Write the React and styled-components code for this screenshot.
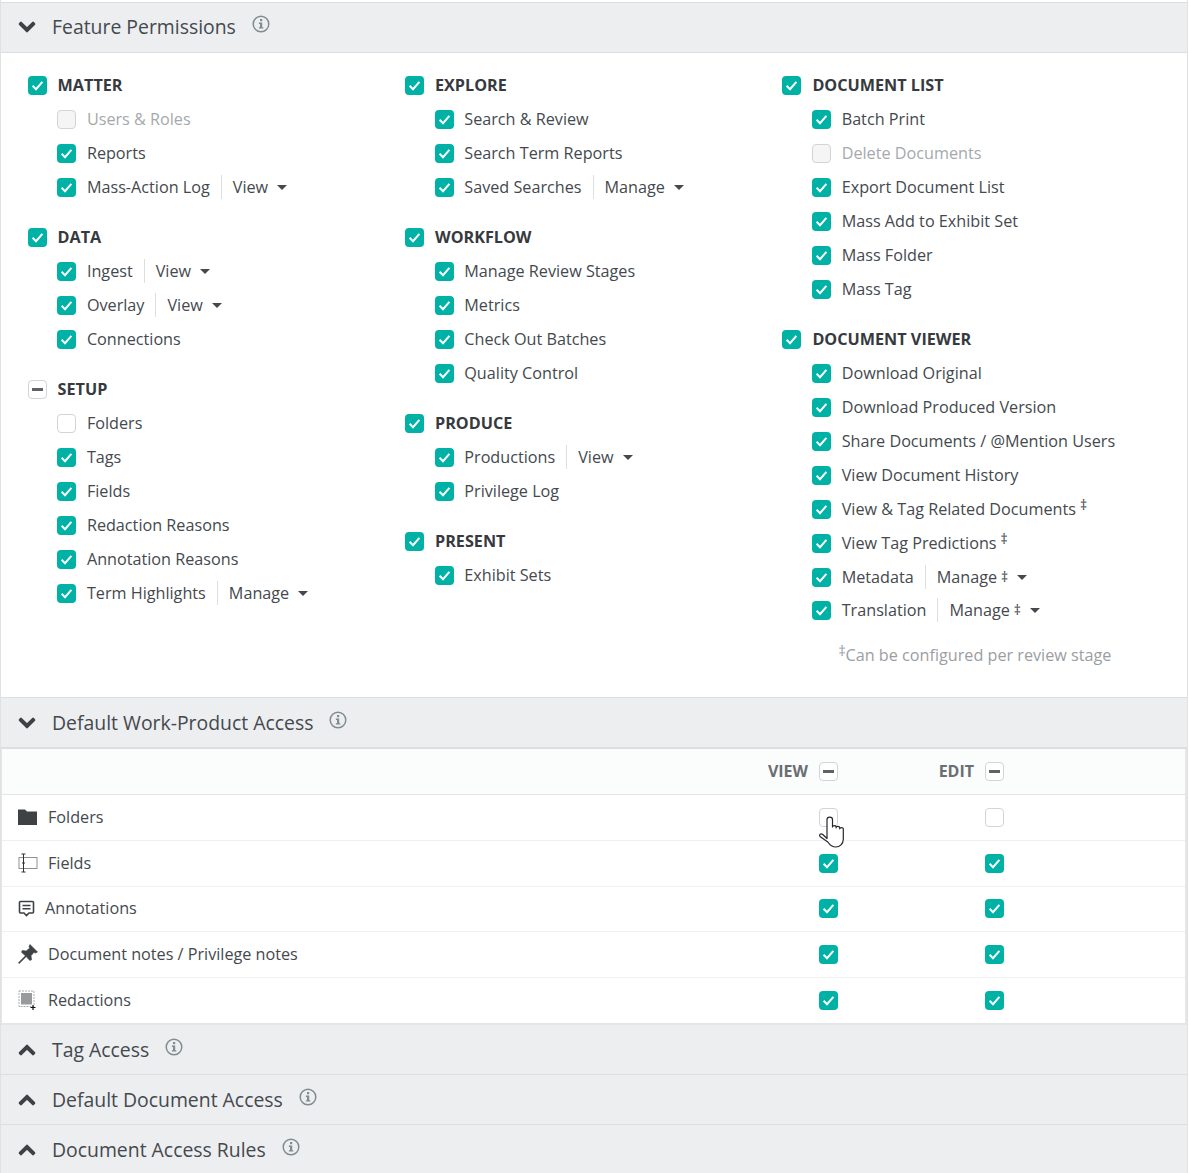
import React from 'react';
import styled, { createGlobalStyle } from 'styled-components';
import { FaChevronDown, FaChevronUp } from 'react-icons/fa';

const GlobalStyle = createGlobalStyle`
  html, body {
    margin: 0;
    padding: 0;
    background: #fff;
    font-family: "Open Sans", "Liberation Sans", sans-serif;
    font-size: 16.2px;
    color: #44494e;
  }
  * { box-sizing: border-box; }
`;

const Page = styled.div`
  position: relative;
  width: 1188px;
  height: 1173px;
  overflow: hidden;
  padding-top: 2px;
  border-left: 1px solid #dfe1e3;
  border-right: 1px solid #dfe1e3;
`;

const SectionHeader = styled.div`
  display: flex;
  align-items: center;
  height: ${({ $height }) => $height || 51}px;
  padding-left: 17px;
  padding-bottom: ${({ $lift }) => ($lift ? 2 : 0)}px;
  background: #edeef0;
  border-top: ${({ $flush }) => ($flush ? 'none' : '1px solid #dcdee0')};
  border-bottom: ${({ $thick }) => ($thick ? 2 : 1)}px solid #dcdee0;
  color: #44494e;
  font-size: 19.4px;
  line-height: 26px;
`;

const Chevron = styled.span`
  display: flex;
  width: 18px;
  margin-right: 16px;
  color: #3e4245;
  font-size: 18px;
  svg { stroke: currentColor; stroke-width: 36; }
`;

const InfoMark = styled.svg`
  width: 18px;
  height: 18px;
  margin-left: 16px;
  margin-top: -6px;
`;

const InfoIcon = () => (
  <InfoMark viewBox="0 0 18 18">
    <circle cx="9" cy="9" r="7.8" fill="none" stroke="#7f8c90" strokeWidth="1.5" />
    <rect x="8" y="4" width="2.2" height="2.2" fill="#7f8c90" />
    <path d="M6.9 7.6h3.3v4.6h1.1v1.3H6.9v-1.3H8V8.9H6.9z" fill="#7f8c90" />
  </InfoMark>
);

const Columns = styled.div`
  display: grid;
  grid-template-columns: 377.4px 377.4px 1fr;
  height: 644px;
  padding: 15px 0 0 26.6px;
`;

const Group = styled.div`
  margin-bottom: 16px;
`;

const Row = styled.div`
  display: flex;
  align-items: center;
  height: ${({ $height }) => $height || 34}px;
  padding-left: ${({ $head }) => ($head ? 0 : 29.8)}px;
`;

const Box = styled.span`
  display: inline-flex;
  flex: none;
  align-items: center;
  justify-content: center;
  width: 19px;
  height: 19px;
  border-radius: 4px;
  background: ${({ $state }) =>
    $state === 'on' ? '#00b1a6' : $state === 'disabled' ? '#f5f5f5' : '#fff'};
  border: ${({ $state }) =>
    $state === 'on' ? 'none' : '1px solid #d2d4d6'};
`;

const Dash = styled.span`
  width: 11px;
  height: 3px;
  background: #5f6366;
`;

const CheckBox = ({ state }) => (
  <Box $state={state}>
    {state === 'on' && (
      <svg width="13" height="11" viewBox="0 0 13 11">
        <path d="M1.6 5.8l3.4 3.4 6.4-7.4" fill="none" stroke="#fff" strokeWidth="2" />
      </svg>
    )}
    {state === 'mixed' && <Dash />}
  </Box>
);

const HeadLabel = styled.span`
  margin-left: 11px;
  font-weight: 700;
  color: #363a3e;
`;

const Label = styled.span`
  margin-left: 10.5px;
  color: ${({ $disabled }) => ($disabled ? '#a5a9ad' : '#44494e')};
`;

const Dropdown = styled.span`
  display: inline-flex;
  align-items: center;
  height: 24px;
  margin-left: 11px;
  padding-left: 11px;
  border-left: 1px solid #dcdee0;
`;

const Caret = styled.span`
  width: 0;
  height: 0;
  margin-left: 9px;
  border-left: 5.5px solid transparent;
  border-right: 5.5px solid transparent;
  border-top: 5px solid #44494e;
`;

const Dagger = styled.sup`
  margin-left: 4px;
  font-size: 14px;
  line-height: 0;
  vertical-align: 5px;
`;

const Note = styled.div`
  margin-top: 18px;
  padding-left: 56px;
  color: #9a9ea2;
`;

const NoteDagger = styled.sup`
  font-size: 14px;
  line-height: 0;
  vertical-align: 5px;
`;

const Table = styled.div`
  height: 276px;
  border: 2px solid #e4e6e8;
  border-top: none;
  border-left-width: 1px;
`;

const TableHead = styled.div`
  display: grid;
  grid-template-columns: 1fr 166px 166px;
  align-items: center;
  height: 46px;
  padding-right: 181px;
  background: #fbfcfc;
  border-bottom: 1px solid #e2e4e6;
`;

const HeadCell = styled.div`
  display: flex;
  align-items: center;
  justify-content: flex-end;
  gap: 11px;
  color: #6a6e72;
  font-size: 16px;
  font-weight: 700;
`;

const HeadText = styled.span`
  margin-top: -1px;
`;

const TableRow = styled.div`
  display: grid;
  grid-template-columns: 1fr 166px 166px;
  align-items: center;
  height: ${({ $height }) => $height || 46}px;
  padding-right: 181px;
  padding-bottom: ${({ $lift }) => ($lift ? 1 : 0)}px;
  border-bottom: 1px solid #eff0f1;
  &:last-child { border-bottom: none; }
`;

const NameCell = styled.div`
  display: flex;
  align-items: center;
  padding-left: 16px;
  margin-top: -1px;
`;

const RowIcon = styled.span`
  display: flex;
  align-items: center;
  justify-content: flex-start;
  width: ${({ $width }) => $width || 30}px;
  height: 20px;
  color: #3e4245;
`;

const CheckCell = styled.div`
  display: flex;
  justify-content: flex-end;
`;

const Pointer = styled.svg`
  position: absolute;
  left: 816px;
  top: 815px;
  width: 30px;
  height: 34px;
`;

const FolderIcon = () => (
  <svg width="19" height="16" viewBox="0 0 19 16">
    <path d="M0 .5h7L9 2.500h10V16H0z" fill="#3e4245" />
  </svg>
);

const FieldIcon = () => (
  <svg width="20" height="20" viewBox="0 0 20 20">
    <rect x="1" y="4.500" width="18" height="11" fill="none" stroke="#8d9194" strokeWidth="1" />
    <path d="M3.500 1h4M5.500 1v18M3.500 19h4M4 10h3" fill="none" stroke="#2e3235" strokeWidth="1" />
  </svg>
);

const NoteIcon = () => (
  <svg width="17" height="17" viewBox="0 0 17 17">
    <path d="M2.500 1.500h12a1 1 0 0 1 1 1v9.500a1 1 0 0 1-1 1h-3.500l-2.500 2.500-2.500-2.500H2.500a1 1 0 0 1-1-1V2.500a1 1 0 0 1 1-1z" fill="none" stroke="#3e4245" strokeWidth="1.600" />
    <path d="M4.500 5.500h8M4.500 8.800h8" stroke="#3e4245" strokeWidth="1.500" />
  </svg>
);

const PinIcon = () => (
  <svg width="20" height="20" viewBox="0 0 20 20">
    <path d="M12 .5l7.500 7.500-2 1-1.500-.7-3 3.500.6 3.900-1.800.8-3.600-3.900-7 7-.8-.8 7-7-3.900-3.600.8-1.800 3.900.6 3.500-3-.7-1.500z" fill="#3e4245" stroke="#3e4245" strokeWidth=".6" strokeLinejoin="round" />
  </svg>
);

const RedactIcon = () => (
  <svg width="20" height="20" viewBox="0 0 20 20">
    <rect x="1" y="1" width="15" height="15.500" fill="none" stroke="#a9acae" strokeDasharray="2 1" />
    <rect x="3" y="3" width="11" height="11.500" fill="#989a9c" />
    <path d="M15 15v5M12.500 17.500h5" stroke="#111" strokeWidth="1.200" />
  </svg>
);

const columns = [
  [
    { title: 'MATTER', state: 'on', items: [
      { label: 'Users & Roles', state: 'disabled' },
      { label: 'Reports' },
      { label: 'Mass-Action Log', menu: 'View' },
    ] },
    { title: 'DATA', state: 'on', items: [
      { label: 'Ingest', menu: 'View' },
      { label: 'Overlay', menu: 'View' },
      { label: 'Connections' },
    ] },
    { title: 'SETUP', state: 'mixed', items: [
      { label: 'Folders', state: 'off' },
      { label: 'Tags' },
      { label: 'Fields' },
      { label: 'Redaction Reasons' },
      { label: 'Annotation Reasons' },
      { label: 'Term Highlights', menu: 'Manage' },
    ] },
  ],
  [
    { title: 'EXPLORE', state: 'on', items: [
      { label: 'Search & Review' },
      { label: 'Search Term Reports' },
      { label: 'Saved Searches', menu: 'Manage' },
    ] },
    { title: 'WORKFLOW', state: 'on', items: [
      { label: 'Manage Review Stages' },
      { label: 'Metrics' },
      { label: 'Check Out Batches' },
      { label: 'Quality Control' },
    ] },
    { title: 'PRODUCE', state: 'on', items: [
      { label: 'Productions', menu: 'View' },
      { label: 'Privilege Log' },
    ] },
    { title: 'PRESENT', state: 'on', items: [{ label: 'Exhibit Sets' }] },
  ],
  [
    { title: 'DOCUMENT LIST', state: 'on', items: [
      { label: 'Batch Print' },
      { label: 'Delete Documents', state: 'disabled' },
      { label: 'Export Document List' },
      { label: 'Mass Add to Exhibit Set' },
      { label: 'Mass Folder' },
      { label: 'Mass Tag' },
    ] },
    { title: 'DOCUMENT VIEWER', state: 'on', items: [
      { label: 'Download Original' },
      { label: 'Download Produced Version' },
      { label: 'Share Documents / @Mention Users' },
      { label: 'View Document History' },
      { label: 'View & Tag Related Documents', dagger: true },
      { label: 'View Tag Predictions', dagger: true },
      { label: 'Metadata', menu: 'Manage', dagger: true },
      { label: 'Translation', menu: 'Manage', dagger: true, height: 32 },
    ] },
  ],
];

const tableRows = [
  { name: 'Folders', icon: <FolderIcon />, view: 'off', edit: 'off' },
  { name: 'Fields', icon: <FieldIcon />, view: 'on', edit: 'on' },
  { name: 'Annotations', icon: <NoteIcon />, iconWidth: 27, view: 'on', edit: 'on', height: 45, lift: true },
  { name: 'Document notes / Privilege notes', icon: <PinIcon />, view: 'on', edit: 'on' },
  { name: 'Redactions', icon: <RedactIcon />, view: 'on', edit: 'on', height: 45 },
];

const Header = ({ title, open, height, thick, lift, flush }) => (
  <SectionHeader $height={height} $thick={thick} $lift={lift} $flush={flush}>
    <Chevron>{open ? <FaChevronDown /> : <FaChevronUp />}</Chevron>
    {title}
    <InfoIcon />
  </SectionHeader>
);

const Item = ({ item }) => (
  <Row $height={item.height}>
    <CheckBox state={item.state || 'on'} />
    <Label $disabled={item.state === 'disabled'}>
      {item.label}
      {item.dagger && !item.menu && <Dagger>‡</Dagger>}
    </Label>
    {item.menu && (
      <Dropdown>
        {item.menu}
        {item.dagger && <Dagger>‡</Dagger>}
        <Caret />
      </Dropdown>
    )}
  </Row>
);

const App = () => (
  <Page>
    <GlobalStyle />
    <Header title="Feature Permissions" open lift />
    <Columns>
      {columns.map((groups) => (
        <div key={groups[0].title}>
          {groups.map((group) => (
            <Group key={group.title}>
              <Row $head>
                <CheckBox state={group.state} />
                <HeadLabel>{group.title}</HeadLabel>
              </Row>
              {group.items.map((item) => (
                <Item key={item.label} item={item} />
              ))}
            </Group>
          ))}
          {groups[0].title === 'DOCUMENT LIST' && (
            <Note><NoteDagger>‡</NoteDagger>Can be configured per review stage</Note>
          )}
        </div>
      ))}
    </Columns>
    <Header title="Default Work-Product Access" open thick height={52} />
    <Table>
      <TableHead>
        <span />
        <HeadCell><HeadText>VIEW</HeadText> <CheckBox state="mixed" /></HeadCell>
        <HeadCell><HeadText>EDIT</HeadText> <CheckBox state="mixed" /></HeadCell>
      </TableHead>
      {tableRows.map((row) => (
        <TableRow key={row.name} $height={row.height} $lift={row.lift}>
          <NameCell>
            <RowIcon $width={row.iconWidth}>{row.icon}</RowIcon>
            {row.name}
          </NameCell>
          <CheckCell><CheckBox state={row.view} /></CheckCell>
          <CheckCell><CheckBox state={row.edit} /></CheckCell>
        </TableRow>
      ))}
    </Table>
    <Header title="Tag Access" height={50} flush />
    <Header title="Default Document Access" height={50} flush />
    <Header title="Document Access Rules" height={50} flush />
    <Pointer viewBox="0 0 30 34">
      <path d="M10 19V4.500c0-3.200 5.500-3.200 5.500 0V12c0-1.800 3.600-1.800 3.600 0v.8c0-1.800 3.600-1.800 3.600 0v1c0-1.600 3.600-1.600 3.600 0V24c0 5-3.500 8-7.500 8-4 0-6-2-8-5L3 21.500c-1.300-2 .8-3.500 2.500-2.200L10 23.500z" fill="#fff" stroke="#23262b" strokeWidth="1.200" strokeLinejoin="round" />
    </Pointer>
  </Page>
);

export default App;
